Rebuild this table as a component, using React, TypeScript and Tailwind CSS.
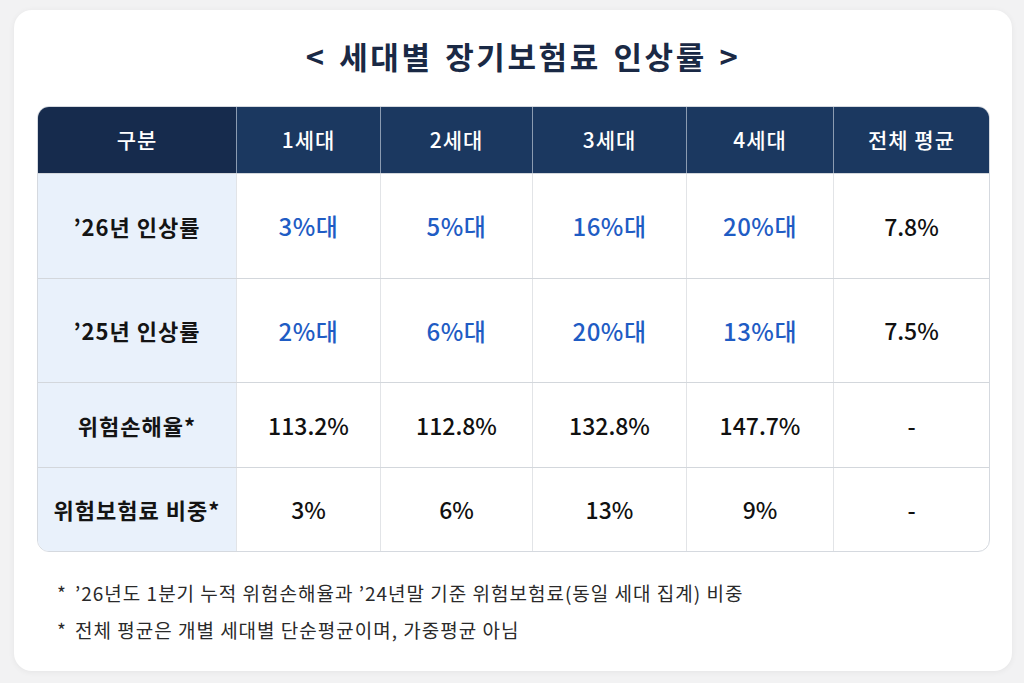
import React from "react";

const font = { fontFamily: '"Noto Sans CJK KR", "Noto Sans", sans-serif' };

const headers = ["구분", "1세대", "2세대", "3세대", "4세대", "전체 평균"];

type Cell = { t: string; blue?: boolean };
const rows: { label: string; h: string; cells: Cell[] }[] = [
  {
    label: "’26년 인상률",
    h: "h-[105px]",
    cells: [
      { t: "3%대", blue: true },
      { t: "5%대", blue: true },
      { t: "16%대", blue: true },
      { t: "20%대", blue: true },
      { t: "7.8%" },
    ],
  },
  {
    label: "’25년 인상률",
    h: "h-[104px]",
    cells: [
      { t: "2%대", blue: true },
      { t: "6%대", blue: true },
      { t: "20%대", blue: true },
      { t: "13%대", blue: true },
      { t: "7.5%" },
    ],
  },
  {
    label: "위험손해율*",
    h: "h-[85px]",
    cells: [{ t: "113.2%" }, { t: "112.8%" }, { t: "132.8%" }, { t: "147.7%" }, { t: "-" }],
  },
  {
    label: "위험보험료 비중*",
    h: "h-[84px]",
    cells: [{ t: "3%" }, { t: "6%" }, { t: "13%" }, { t: "9%" }, { t: "-" }],
  },
];

export default function App() {
  return (
    <div className="min-h-[683px] w-[1024px] bg-[#f2f2f3] pt-[10px] pl-[14px]" style={font}>
      <div className="w-[998px] h-[661px] bg-white rounded-[18px] shadow-[0_1px_6px_rgba(0,0,0,0.06)] pt-[25px] px-[23px]">
        <h1 className="h-[40px] flex items-center justify-center pl-[20px] text-[31px] font-bold text-[#1a2945] leading-none tracking-[2.6px] [word-spacing:3px]">
          &lt; 세대별 장기보험료 인상률 &gt;
        </h1>
        <div className="mt-[31px] w-[953px] rounded-[12px] overflow-hidden border border-[#d5d9df]">
          <div className="grid grid-cols-[198px_144px_152px_154px_147px_156px] h-[66px]">
            {headers.map((h, i) => (
              <div
                key={h}
                className={
                  "flex items-center justify-center text-[21px] font-medium text-white tracking-[1px] " +
                  (i === 0 ? "bg-[#162b4d]" : "bg-[#1b3860] border-l border-[#8b9bb1]")
                }
              >
                {h}
              </div>
            ))}
          </div>
          {rows.map((r) => (
            <div
              key={r.label}
              className={"grid grid-cols-[198px_144px_152px_154px_147px_156px] border-t border-[#d3d7dc] " + r.h}
            >
              <div className="flex items-center justify-center bg-[#e9f1fb] text-[22px] font-bold text-[#141414] tracking-[1px]">
                {r.label}
              </div>
              {r.cells.map((c, j) => (
                <div
                  key={j}
                  className={
                    "flex items-center justify-center border-l border-[#e2e4e7] font-medium " +
                    (c.blue ? "text-[#1f5cc4] text-[24px] tracking-[0.5px]" : "text-[#111111] text-[23px]")
                  }
                >
                  {c.t}
                </div>
              ))}
            </div>
          ))}
        </div>
        <div className="mt-[22px] pl-[20px] text-[19px] text-[#2a2a2a] leading-[37px] tracking-[1px]">
          <div className="flex">
            <span className="w-[18px]">*</span>
            <span>’26년도 1분기 누적 위험손해율과 ’24년말 기준 위험보험료(동일 세대 집계) 비중</span>
          </div>
          <div className="flex">
            <span className="w-[18px]">*</span>
            <span>전체 평균은 개별 세대별 단순평균이며, 가중평균 아님</span>
          </div>
        </div>
      </div>
    </div>
  );
}
